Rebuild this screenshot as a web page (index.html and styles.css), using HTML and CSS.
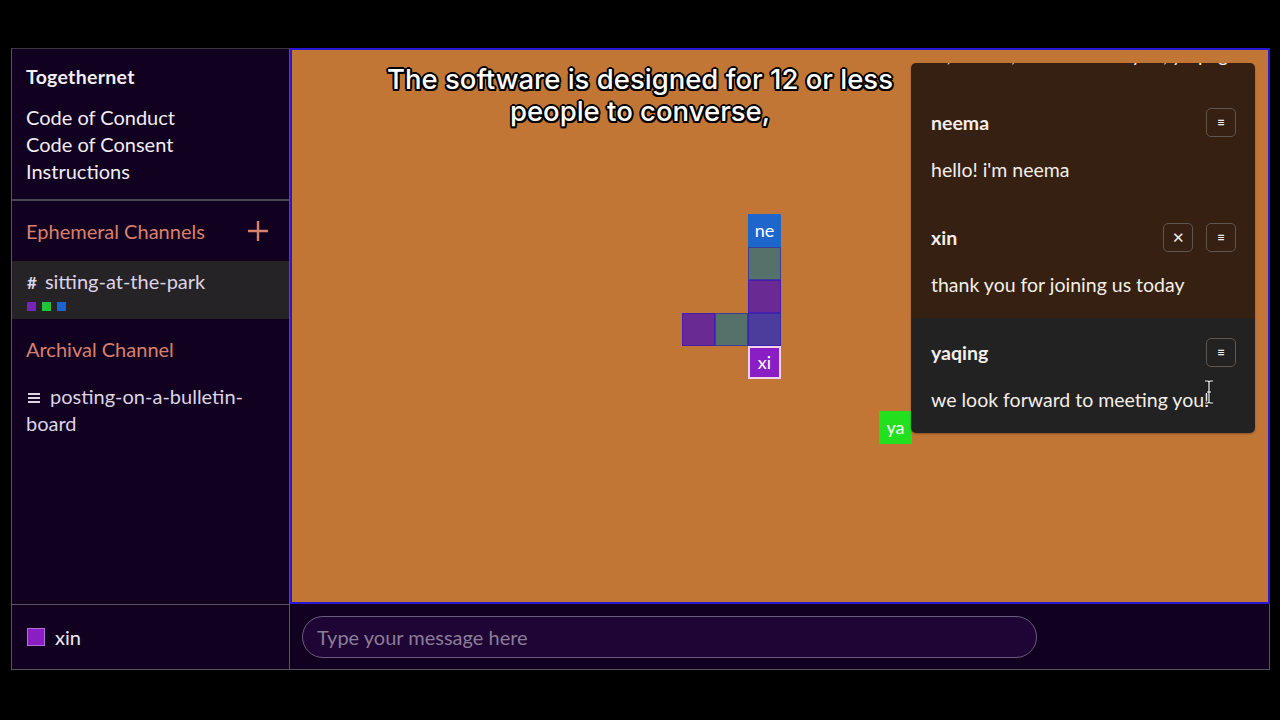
FILE: index.html
```html
<!DOCTYPE html>
<html>
<head>
<meta charset="utf-8">
<link rel="stylesheet" href="styles.css">
</head>
<body>
<div class="app">
  <aside class="sidebar">
    <div class="about">
      <div class="brand">Togethernet</div>
      <div class="links">
        <div>Code of Conduct</div>
        <div>Code of Consent</div>
        <div>Instructions</div>
      </div>
    </div>
    <div class="section-head">
      <span>Ephemeral Channels</span>
      <svg class="plus" width="22" height="22" viewBox="0 0 22 22"><path d="M11 1v20M1 11h20" stroke="#d9806c" stroke-width="2.4" fill="none"/></svg>
    </div>
    <div class="channel active">
      <div class="channel-name"><span class="hash">#</span>sitting-at-the-park</div>
      <div class="dots"><span class="dot purple"></span><span class="dot green"></span><span class="dot blue"></span></div>
    </div>
    <div class="section-head archival"><span>Archival Channel</span></div>
    <div class="channel archive"><svg class="menu-icon" width="12" height="10" viewBox="0 0 12 10"><path d="M0 1h12M0 5h12M0 9h12" stroke="#ddd4e6" stroke-width="1.8"/></svg>posting-on-a-bulletin-board</div>
  </aside>

  <main class="stage">
    <div class="caption">The software is designed for 12 or less<br>people to converse,</div>

    <div class="tile blue-tile" style="left:456px;top:164px">ne</div>
    <div class="tile trail-grey" style="left:456px;top:197px"></div>
    <div class="tile trail-purple" style="left:456px;top:230px"></div>
    <div class="tile trail-mix" style="left:456px;top:263px"></div>
    <div class="tile trail-purple" style="left:390px;top:263px"></div>
    <div class="tile trail-grey" style="left:423px;top:263px"></div>
    <div class="tile me-tile" style="left:456px;top:296px">xi</div>
    <div class="tile green-tile" style="left:587px;top:361px">ya</div>

    <div class="chat">
      <div class="msg brown">
        <div class="msg-head"><span class="name">xin</span></div>
        <div class="msg-text">hi, i'm xin, nice to meet you, yaqing</div>
      </div>
      <div class="msg brown">
        <div class="msg-head"><span class="name">neema</span><span class="btns"><span class="btn">≡</span></span></div>
        <div class="msg-text">hello! i'm neema</div>
      </div>
      <div class="msg brown">
        <div class="msg-head"><span class="name">xin</span><span class="btns"><span class="btn x">✕</span><span class="btn">≡</span></span></div>
        <div class="msg-text">thank you for joining us today</div>
      </div>
      <div class="msg grey">
        <div class="msg-head"><span class="name">yaqing</span><span class="btns"><span class="btn">≡</span></span></div>
        <div class="msg-text">we look forward to meeting you!</div>
      </div>
    </div>

    <svg class="ibeam" width="12" height="26" viewBox="0 0 12 26"><path d="M2 2h3l1 1 1-1h3M6 3v20M2 24h3l1-1 1 1h3M4 13h4" stroke="#111" stroke-width="3" fill="none"/><path d="M2 2h3l1 1 1-1h3M6 3v20M2 24h3l1-1 1 1h3M4 13h4" stroke="#fff" stroke-width="1.2" fill="none"/></svg>
  </main>

  <div class="me">
    <span class="me-swatch"></span><span class="me-name">xin</span>
  </div>
  <div class="composer">
    <input class="message-input" type="text" placeholder="Type your message here">
  </div>
</div>
</body>
</html>
```

FILE: styles.css
```css
html, body {
  margin: 0;
  padding: 0;
  background: #000;
  width: 1280px;
  height: 720px;
  overflow: hidden;
  font-family: Lato, "Open Sans", sans-serif;
}

.app {
  margin: 48px 0 0 11px;
  width: 1259px;
  height: 622px;
  box-sizing: border-box;
  border: 1px solid #5a5460;
  border-top-color: #3a3540;
  background: #110020;
  display: grid;
  grid-template-columns: 278px 1fr;
  grid-template-rows: 555px 1fr;
}

/* ---------- sidebar ---------- */
.sidebar {
  border-right: 1px solid #5a5460;
  color: #f2eef4;
  display: flex;
  flex-direction: column;
}

.about {
  padding: 17px 14px 14px;
  border-bottom: 2px solid #4c4652;
}

.brand {
  font-weight: 700;
  font-size: 19.5px;
  line-height: 22px;
  letter-spacing: 0.3px;
}

.links {
  margin-top: 16px;
  font-size: 20px;
  line-height: 27px;
}

.section-head {
  height: 60px;
  padding: 0 20px 0 14px;
  display: flex;
  align-items: center;
  justify-content: space-between;
  color: #d9806c;
  font-size: 20px;
}

.channel {
  color: #ddd4e6;
  font-size: 20px;
  padding: 0 14px;
}

.channel.active {
  background: #252326;
  height: 58px;
  box-sizing: border-box;
  padding-top: 9px;
}

.channel-name {
  line-height: 22px;
}

.hash {
  font-size: 17px;
  font-weight: 700;
  margin-left: 1px;
  margin-right: 8px;
}

.dots {
  display: flex;
  gap: 6px;
  margin-top: 8px;
  padding-left: 1px;
}

.dot {
  width: 9px;
  height: 9px;
}
.dot.purple { background: #7a22b8; }
.dot.green { background: #1fc43a; }
.dot.blue { background: #1d63c9; }

.channel.archive {
  line-height: 27px;
  padding-top: 4px;
  padding-right: 24px;
}

.menu-icon {
  margin-left: 2px;
  margin-right: 10px;
  vertical-align: 1px;
}

/* ---------- stage ---------- */
.stage {
  position: relative;
  background: #c17636;
  border: 2px solid #2b16d4;
  margin-top: -1px;
  margin-right: -1px;
  overflow: hidden;
}

.caption {
  position: absolute;
  left: 0;
  top: 13px;
  width: 696px;
  text-align: center;
  font-family: Inter, "Open Sans", sans-serif;
  font-weight: 500;
  font-size: 27.5px;
  line-height: 32px;
  color: #fff;
  text-shadow:
    -2px 0 0 #000, 2px 0 0 #000, 0 -2px 0 #000, 0 2px 0 #000,
    -1.5px -1.5px 0 #000, 1.5px -1.5px 0 #000, -1.5px 1.5px 0 #000, 1.5px 1.5px 0 #000;
}

.tile {
  position: absolute;
  width: 33px;
  height: 33px;
  box-sizing: border-box;
  border: 1px solid rgba(40, 20, 190, 0.55);
  color: #fff;
  font-size: 18px;
  line-height: 30px;
  text-align: center;
}

.blue-tile { background: #1e66cc; border-color: #1e66cc; }
.trail-grey { background: #56706a; }
.trail-purple { background: #6a2a94; }
.trail-mix { background: #4c3d9c; }
.me-tile { background: #8a1ec4; border: 2px solid #f4d2ea; line-height: 28px; }
.green-tile { background: #22e01e; border-color: #22e01e; }

.chat {
  position: absolute;
  left: 619px;
  top: 13px;
  width: 344px;
  height: 370px;
  border-radius: 5px;
  overflow: hidden;
  display: flex;
  flex-direction: column;
  justify-content: flex-end;
  box-shadow: 0 1px 2px rgba(0,0,0,0.3);
}

.msg {
  flex-shrink: 0;
  height: 115px;
  box-sizing: border-box;
  padding: 19px 19px 0 20px;
  color: #f3eee8;
  font-size: 19.5px;
}

.msg.brown { background: #352011; }
.msg.grey { background: #222222; }

.msg-head {
  height: 30px;
  display: flex;
  align-items: center;
  justify-content: space-between;
}

.name {
  font-weight: 700;
}

.btns {
  display: flex;
  gap: 13px;
}

.btn {
  width: 30px;
  height: 29px;
  box-sizing: border-box;
  border: 1.5px solid #5e5650;
  border-radius: 5px;
  display: flex;
  align-items: center;
  justify-content: center;
  font-size: 13px;
  font-weight: 700;
  color: #eee;
}

.btn.x {
  font-size: 15px;
  font-weight: 400;
}

.msg-text {
  margin-top: 22px;
  line-height: 22px;
}

.ibeam {
  position: absolute;
  left: 911px;
  top: 329px;
}

/* ---------- bottom bar ---------- */
.me {
  border-right: 1px solid #5a5460;
  border-top: 1px solid #5a5460;
  display: flex;
  align-items: center;
  padding-left: 15px;
  color: #ede8f0;
  font-size: 20px;
}

.me-swatch {
  width: 18px;
  height: 18px;
  box-sizing: border-box;
  background: #8a1ec4;
  border: 1px solid #b070d8;
  margin-right: 10px;
}

.composer {
  display: flex;
  align-items: center;
  padding-left: 12px;
}

.message-input {
  width: 735px;
  height: 42px;
  box-sizing: border-box;
  border-radius: 21px;
  border: 1.5px solid #6a5a7c;
  background: #1f0436;
  padding: 0 14px;
  font-family: Lato, "Open Sans", sans-serif;
  font-size: 20px;
  color: #fff;
  outline: none;
}

.message-input::placeholder {
  color: #8c7e98;
}
```
